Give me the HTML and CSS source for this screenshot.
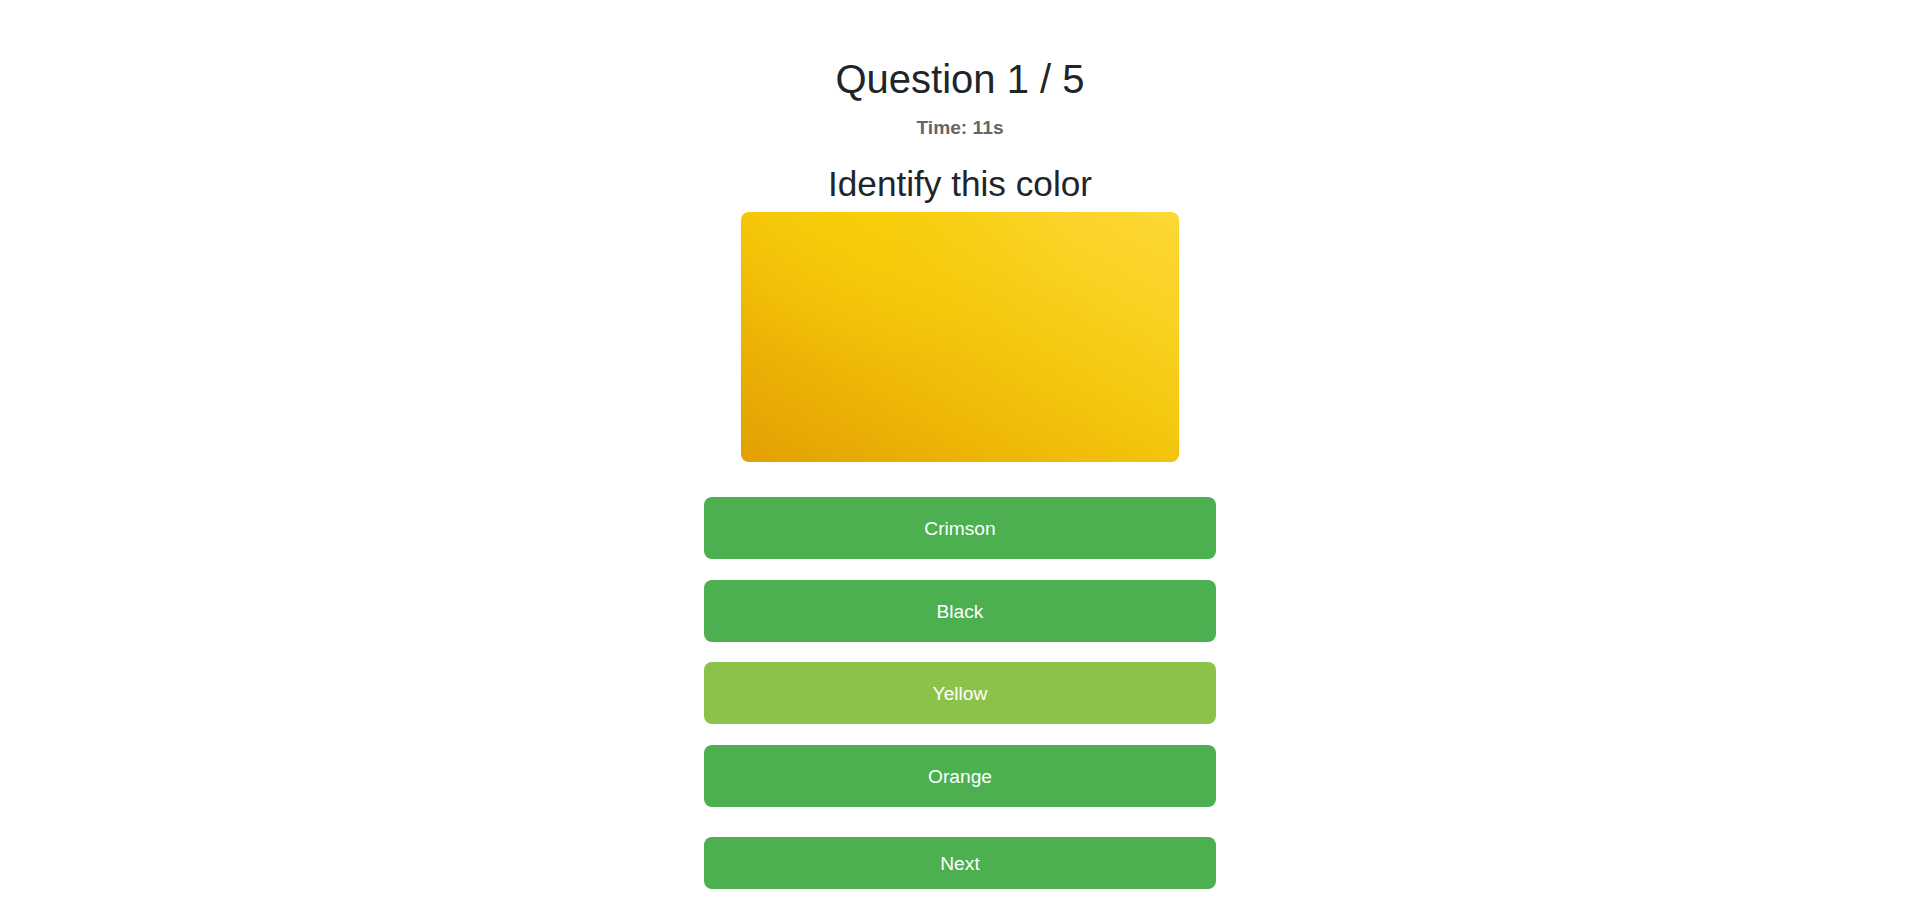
FILE: index.html
```html
<!DOCTYPE html>
<html lang="en">
<head>
<meta charset="utf-8">
<title>Color Quiz</title>
<link rel="stylesheet" href="styles.css">
</head>
<body>
<main class="quiz">
  <h1 class="quiz-title">Question 1 / 5</h1>
  <div class="timer">Time: 11s</div>
  <h2 class="prompt">Identify this color</h2>
  <div class="swatch" role="img" aria-label="Color sample"></div>
  <div class="options">
    <button class="option">Crimson</button>
    <button class="option">Black</button>
    <button class="option option-hover">Yellow</button>
    <button class="option">Orange</button>
  </div>
  <button class="next">Next</button>
</main>
</body>
</html>
```

FILE: styles.css
```css
html, body {
  margin: 0;
  padding: 0;
  background: #ffffff;
}

body {
  font-family: "Liberation Sans", Arial, sans-serif;
  color: #212529;
}

.quiz {
  display: flex;
  flex-direction: column;
  align-items: center;
  padding-top: 56px;
}

.quiz-title {
  margin: 0;
  font-size: 40px;
  font-weight: 400;
  line-height: 46px;
}

.timer {
  margin-top: 15px;
  font-size: 19.2px;
  line-height: 22px;
  font-weight: 700;
  color: #666666;
}

.prompt {
  margin: 24px 0 0;
  font-size: 35.2px;
  font-weight: 400;
  line-height: 41px;
}

.swatch {
  margin-top: 8px;
  width: 438px;
  height: 250px;
  border-radius: 8px;
  background:
    radial-gradient(ellipse at 30% 0%, rgba(250, 206, 0, 0.55), rgba(250, 206, 0, 0) 45%),
    linear-gradient(to top right, #e2a002 0%, #eeb607 30%, #f5c70f 55%, #f9d223 78%, #fdd835 100%);
}

.options {
  margin-top: 35px;
  width: 512px;
  display: flex;
  flex-direction: column;
  gap: 20.5px;
}

.option,
.next {
  display: block;
  width: 512px;
  border: none;
  border-radius: 8px;
  background: #4caf50;
  color: #ffffff;
  font-family: "Liberation Sans", Arial, sans-serif;
  font-size: 19.2px;
  line-height: 22px;
  padding: 21px 0 19px;
  cursor: pointer;
}

.option-hover {
  background: #8bc34a;
}

.next {
  margin-top: 30px;
  padding: 16px 0 14px;
}
```
